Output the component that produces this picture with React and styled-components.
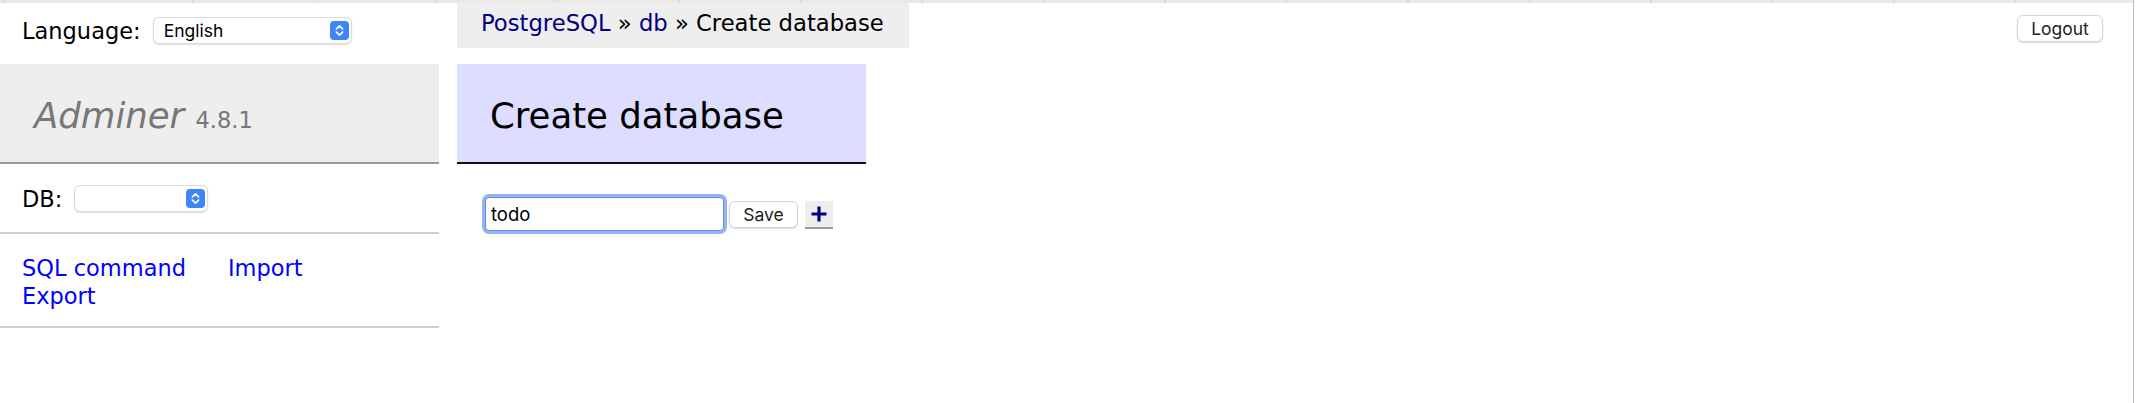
import styled, { createGlobalStyle } from "styled-components"

const Global = createGlobalStyle`
body{
    margin: 0;
    background: #fff;
    font-family: "DejaVu Sans", Verdana, sans-serif;
    font-size: 22.5px;
    line-height: 28px;
    color: #000;
}
a{
    text-decoration: none;
}
`

function Stepper(){
    return(
        <Knob>
            <svg width="19" height="19" viewBox="0 0 19 19">
                <path d="M6.3 8 L9.5 4.9 L12.7 8" fill="none" stroke="#fff" strokeWidth="1.7" strokeLinecap="round" strokeLinejoin="round"/>
                <path d="M6.3 11 L9.5 14.1 L12.7 11" fill="none" stroke="#fff" strokeWidth="1.7" strokeLinecap="round" strokeLinejoin="round"/>
            </svg>
        </Knob>
    )
}

function Select({ width, value }){
    return(
        <SelectBox $width={width}>
            <span>{value}</span>
            <Stepper/>
        </SelectBox>
    )
}

export default function App(){
    return(<>
    <Global/>
    <Page>
        <TopStrip/>
        <Layout>
            <Menu>
                <LangRow>
                    Language:
                    <Select width={199} value="English"/>
                </LangRow>
                <Title>
                    <i>Adminer</i> <Version>4.8.1</Version>
                </Title>
                <DbRow>
                    DB:
                    <Select width={134} value=""/>
                </DbRow>
                <Links>
                    <LinkWrap>
                        <a href="#sql">SQL command</a>
                        <a href="#import">Import</a>
                        <a href="#export">Export</a>
                    </LinkWrap>
                </Links>
            </Menu>

            <Content>
                <TopBar>
                    <Breadcrumb>
                        <Crumb href="#pg">PostgreSQL</Crumb> » <Crumb href="#db">db</Crumb> » Create database
                    </Breadcrumb>
                    <Button $width={86} $top={12}>Logout</Button>
                </TopBar>
                <Heading>Create database</Heading>
                <Form>
                    <NameInput defaultValue="todo" autoFocus/>
                    <Button $width={69}>Save</Button>
                    <AddButton title="Add next">
                        <svg width="18" height="18" viewBox="0 0 18 18">
                            <path d="M9 1.5 V16.5 M1.5 9 H16.5" stroke="#000080" strokeWidth="3.2"/>
                        </svg>
                    </AddButton>
                </Form>
            </Content>
        </Layout>
    </Page>
    </>)
}

const Page=styled.div`
width: calc(100% - 2px);
min-height: 100vh;
box-sizing: border-box;
border-right: 1px solid #b8b8b8;
`

const TopStrip=styled.div`
height: 3px;
background: repeating-linear-gradient(to right, #ece8e5 0 120px, #dcd8d4 120px 121.5px);
background-position: 72px 0;
`

const Layout=styled.div`
display: flex;
align-items: flex-start;
`

const Menu=styled.div`
width: 439px;
flex-shrink: 0;
`

const LangRow=styled.div`
display: flex;
align-items: center;
gap: 12px;
height: 27px;
padding: 14px 22px 20px;
`

const DbRow=styled.div`
display: flex;
align-items: center;
gap: 12px;
height: 27px;
padding: 21px 22px 20px;
border-bottom: 2px solid #cfcfcf;
`

const SelectBox=styled.div`
width: ${p => p.$width}px;
height: 27px;
box-sizing: border-box;
display: flex;
align-items: center;
justify-content: space-between;
padding: 0 2px 0 10px;
border: 1px solid #dadada;
border-radius: 6px;
background: #fff;
box-shadow: 0 1px 1.5px rgba(0,0,0,0.14);
font-family: Inter, "Liberation Sans", sans-serif;
font-size: 17.5px;
color: #000;
`

const Knob=styled.span`
width: 19px;
height: 19px;
border-radius: 4px;
background: #3e86f5;
display: flex;
`

const Title=styled.h1`
margin: 0;
padding: 30px 32px 24px 34px;
height: 44px;
font-size: 35.5px;
line-height: 44px;
font-weight: normal;
color: #777;
background: #eee;
border-bottom: 2px solid #999;
i{
    font-style: italic;
}
`

const Version=styled.span`
font-size: 22.5px;
line-height: 1;
color: #777;
`

const Links=styled.div`
padding: 20px 22px 16px;
border-bottom: 2px solid #cfcfcf;
`

const LinkWrap=styled.div`
display: flex;
flex-wrap: wrap;
column-gap: 42px;
max-width: 360px;
a{
    color: #0000ff;
}
`

const Content=styled.div`
flex: 1;
margin-left: 18px;
`

const TopBar=styled.div`
display: flex;
align-items: flex-start;
`

const Breadcrumb=styled.div`
background: #eee;
padding: 6px 25px 11px 24px;
font-size: 22.7px;
white-space: nowrap;
`

const Crumb=styled.a`
color: #000080;
`

const Button=styled.button`
width: ${p => p.$width}px;
height: 27px;
margin-top: ${p => p.$top || 0}px;
box-sizing: border-box;
padding: 0;
border: 1px solid #d4d4d4;
border-radius: 6px;
background: #fff;
box-shadow: 0 1px 1.5px rgba(0,0,0,0.14);
font-family: Inter, "Liberation Sans", sans-serif;
font-size: 17.5px;
color: #222;
${TopBar} &{
    margin-left: auto;
    margin-right: 30px;
}
`

const Heading=styled.h2`
width: 409px;
box-sizing: border-box;
margin: 16px 0 0;
padding: 30px 32px 24px 33px;
height: 100px;
font-size: 35.5px;
line-height: 44px;
font-weight: normal;
color: #000;
background: #ddf;
border-bottom: 2px solid #111;
`

const Form=styled.div`
display: flex;
align-items: center;
padding: 33px 0 0 28px;
`

const NameInput=styled.input`
width: 239px;
height: 34px;
box-sizing: border-box;
margin-right: 5px;
padding: 0 5px;
border: 1px solid #5f8fe6;
border-radius: 4px;
outline: none;
box-shadow: 0 0 0 3px #94b4f2;
font-family: Inter, "Liberation Sans", sans-serif;
font-size: 18.5px;
color: #000;
caret-color: #000;
`

const AddButton=styled.span`
width: 28px;
height: 28px;
margin-left: 7px;
margin-top: 2px;
box-sizing: border-box;
display: flex;
align-items: center;
justify-content: center;
background: #eee;
border-bottom: 2px solid #999;
`
